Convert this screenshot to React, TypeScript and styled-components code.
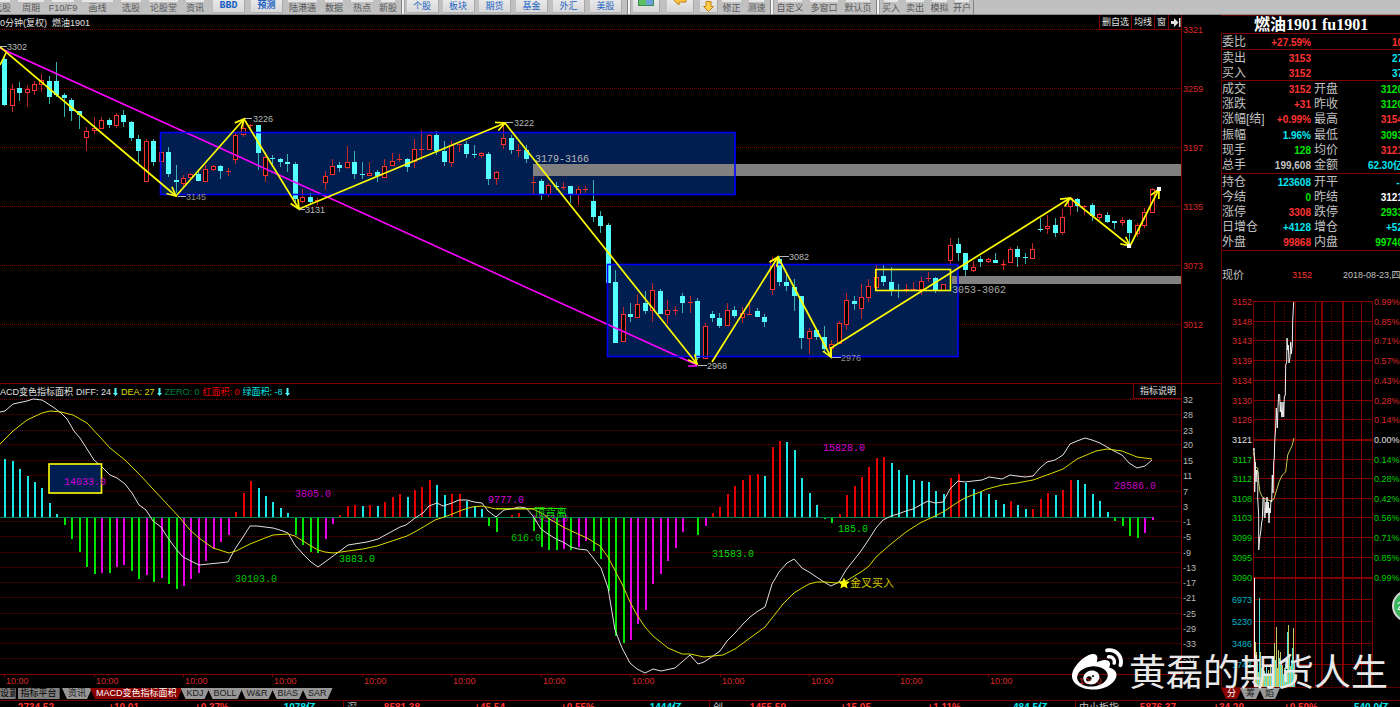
import React from 'react';
import styled, { createGlobalStyle } from 'styled-components';
import { FaWeibo } from 'react-icons/fa';

const SANS = '"Liberation Sans", "Noto Sans CJK SC", sans-serif';
const MONO = '"Liberation Mono", "Noto Sans CJK SC", monospace';
const SERIF = '"Liberation Serif", "Noto Sans CJK SC", serif';

const C = {
  red: '#ff3232',
  axis: '#dc2828',
  line: '#800000',
  dim: '#5c0000',
  dots: '#680000',
  cyan: '#54ffff',
  aqua: '#00e6f0',
  green: '#00e600',
  yellow: '#ffff00',
  grey: '#c0c0c0',
  navy: '#001f50',
  blue: '#0000ff',
};

const GlobalStyle = createGlobalStyle`
  * { box-sizing: border-box; }
  body { margin: 0; background: #000; font-family: ${SANS}; overflow: hidden; }
  button { font-family: inherit; padding: 0; margin: 0; border: 0; background: none; cursor: pointer; white-space: nowrap; }
  svg { display: block; }
`;

const Page = styled.div`
  position: relative;
  display: flex;
  flex-direction: column;
  height: 100vh;
  overflow: hidden;
  color: ${C.grey};
`;

/* ---------- top toolbar ---------- */
const Toolbar = styled.header`
  flex: none;
  display: flex;
  height: 15px;
  overflow: hidden;
  background: #c0c0c0;
  border-bottom: 1px solid #8c8c8c;
`;
const ToolGroup = styled.div`
  display: flex;
  flex: none;
  &:first-child { margin-left: -10px; }
`;
const ToolDivider = styled.span`
  flex: none;
  width: 6px;
  height: 14px;
  border-left: 2px solid #c0c0c0;
  background: linear-gradient(90deg, #808080 0 1px, #f4f4f4 1px 3px, #a0a0a0 3px);
`;
const ToolEnd = styled.span`
  width: 1px;
  background: #808080;
`;
const ToolButton = styled.button<{ $w: number }>`
  flex: none;
  width: ${(p) => p.$w}px;
  height: 14px;
  padding-top: 2px;
  font-size: 9px;
  line-height: 13px;
  color: #585858;
  background: linear-gradient(#e6e6e6, #e6e6e6) center top / calc(100% - 8px) 2px no-repeat;
`;
const BlueButton = styled.button<{ $w: number; $bold?: boolean }>`
  flex: none;
  display: flex;
  justify-content: center;
  width: ${(p) => p.$w}px;
  height: 14px;
  font-family: ${(p) => (p.$bold ? MONO : SANS)};
  font-weight: ${(p) => (p.$bold ? 700 : 400)};
  color: #1a62c4;
`;
const Face = styled.span<{ $w: number; $size?: number }>`
  display: flex;
  align-items: center;
  justify-content: center;
  width: ${(p) => p.$w}px;
  height: 13px;
  font-size: ${(p) => p.$size ?? 9}px;
  line-height: 12px;
  background: linear-gradient(#e8e8e8, #d8d8d8);
  border-right: 1px solid #a8a8a8;
  border-bottom: 1px solid #b0b0b0;
`;

/* ---------- main area ---------- */
const Main = styled.main`
  flex: none;
  display: flex;
`;
const Charts = styled.div`
  flex: 1;
  min-width: 0;
  padding-right: 1px;
`;
const Panel = styled.section<{ $lined?: boolean }>`
  position: relative;
  display: grid;
  grid-template-columns: 1fr 39px;
  ${(p) => p.$lined && `border-top: 1px solid ${C.line};`}
  margin-right: -1px;
  padding-right: 1px;
`;
const Plot = styled.svg<{ $h: number }>`
  width: 100%;
  height: ${(p) => p.$h}px;
  overflow: hidden;
`;
const PanelTitle = styled.div<{ $gap?: number }>`
  position: absolute;
  left: 0;
  top: 1px;
  display: flex;
  gap: ${(p) => p.$gap ?? 5}px;
  font-size: 9px;
  line-height: 14px;
  color: #e0e0e0;
  white-space: pre;
`;
const Legend = styled.span<{ $c: string }>`
  display: flex;
  align-items: center;
  gap: 2px;
  color: ${(p) => p.$c};
`;
const PanelButtons = styled.div`
  position: absolute;
  right: 39px;
  top: 0;
  display: flex;
`;
const PanelButton = styled.button<{ $w: number }>`
  width: ${(p) => p.$w}px;
  height: 15px;
  padding-top: 1px;
  font-size: 9px;
  line-height: 13px;
  color: #e0e0e0;
  border-left: 1px solid ${C.line};
  border-bottom: 1px solid ${C.line};
  svg { margin: 0 auto; }
`;
const TabBar = styled.nav`
  display: flex;
  height: 12px;
  padding-bottom: 1px;
`;
const SetButton = styled.button<{ $w: number }>`
  width: ${(p) => p.$w}px;
  height: 11px;
  margin-right: 2px;
  overflow: hidden;
  font-size: 9px;
  line-height: 11px;
  color: #000;
  background: #808080;
  border-right: 1px solid #555;
`;
const Tab = styled.button<{ $active?: boolean }>`
  height: 11px;
  padding: 0 6px;
  margin-right: -2px;
  font-size: 9px;
  line-height: 11px;
  color: ${(p) => (p.$active ? '#fff' : '#202020')};
  background: ${(p) => (p.$active ? '#8a0000' : '#989898')};
  clip-path: polygon(0 0, 100% 0, calc(100% - 5px) 100%, 5px 100%);
`;

/* ---------- quote sidebar ---------- */
const Sidebar = styled.aside`
  flex: none;
  width: 179px;
  overflow: hidden;
  border-top: 1px solid ${C.dim};
`;
const Title = styled.h1`
  margin: 0;
  padding-left: 33px;
  height: 17px;
  font: 700 16px/17px ${SERIF};
  color: #fff;
  white-space: nowrap;
`;
const SideBody = styled.div`
  border-left: 1px solid ${C.dim};
`;
const Quotes = styled.dl<{ $h: number }>`
  display: grid;
  grid-template-columns: 89px 89px;
  column-gap: 3px;
  grid-auto-rows: 1fr;
  height: ${(p) => p.$h}px;
  margin: 0;
  padding-top: 1px;
  border-top: 1px solid ${C.line};
`;
const Field = styled.div`
  display: flex;
  justify-content: space-between;
  align-items: center;
  line-height: 15px;
  white-space: nowrap;
  dt { font-size: 12px; }
  dd { margin: 0; font-size: 10px; font-weight: 700; }
`;
const NowRow = styled.div`
  display: grid;
  grid-template-columns: 70px 51px 80px;
  align-items: center;
  height: 49px;
  border-top: 1px solid ${C.line};
  font-size: 9px;
  line-height: 14px;
  white-space: nowrap;
  b { font-size: 11px; font-weight: 400; }
  span { color: ${C.red}; }
`;

/* ---------- index ticker ---------- */
const Ticker = styled.footer`
  flex: none;
  display: flex;
  height: 15px;
  margin-left: -23px;
  border-top: 1px solid ${C.line};
  font-size: 10px;
  font-weight: 700;
  line-height: 13px;
`;
const IndexCell = styled.div<{ $cols: string }>`
  flex: none;
  width: 366px;
  display: grid;
  grid-template-columns: ${(p) => p.$cols};
  border-left: 1px solid ${C.line};
  text-align: right;
  white-space: nowrap;
  color: ${C.red};
  b { font-weight: 400; text-align: left; padding-left: 3px; color: ${C.grey}; }
  em { font-style: normal; color: ${C.aqua}; }
`;

/* ---------- overlays ---------- */
const Watermark = styled.div`
  position: absolute;
  right: 12px;
  bottom: 10px;
  display: flex;
  align-items: center;
  gap: 6px;
  font: 400 37px/54px "Noto Sans CJK SC", sans-serif;
  color: #e8e8e8;
  white-space: nowrap;
  svg { color: #fff; }
`;
const Bubble = styled.button`
  position: absolute;
  right: -24px;
  top: 590px;
  width: 32px;
  height: 32px;
  padding-left: 3px;
  border: 2px solid #d8d8d8;
  border-radius: 50%;
  background: #3cb45a;
  color: #fff;
  font-size: 10px;
  text-align: left;
`;

/* ---------- data ---------- */
// bar index, colour, body top, body bottom, high, low
type Candle = [number, 'r' | 'c', number, number, number, number];
const candles: Candle[] = [
  [0, 'c', 59, 105, 55, 106], [1, 'r', 89, 105, 84, 112], [2, 'c', 88, 93, 82, 101], [3, 'r', 89, 92, 85, 107],
  [4, 'r', 84, 90, 81, 95], [5, 'r', 80, 84, 74, 92], [6, 'c', 81, 97, 76, 104], [7, 'c', 81, 95, 62, 97],
  [8, 'c', 95, 98, 93, 117], [9, 'c', 100, 111, 98, 121], [10, 'c', 111, 115, 111, 129], [11, 'r', 131, 137, 127, 151],
  [12, 'r', 128, 130, 117, 134], [13, 'r', 120, 128, 117, 129], [14, 'c', 120, 125, 118, 128], [15, 'r', 115, 125, 113, 128],
  [16, 'c', 115, 122, 110, 127], [17, 'c', 122, 138, 121, 141], [18, 'c', 139, 151, 135, 165], [19, 'r', 141, 181, 139, 182],
  [20, 'c', 141, 162, 139, 166], [21, 'r', 152, 161, 152, 161], [22, 'c', 152, 174, 147, 177], [23, 'c', 180, 182, 165, 193],
  [24, 'r', 178, 183, 175, 187], [25, 'r', 174, 177, 173, 180], [26, 'c', 174, 181, 171, 181], [27, 'r', 169, 181, 165, 182],
  [28, 'r', 166, 169, 165, 171], [29, 'c', 166, 171, 165, 179], [30, 'r', 171, 171, 168, 176], [31, 'r', 135, 159, 133, 164],
  [32, 'r', 128, 134, 122, 137], [33, 'r', 125, 126, 124, 130], [34, 'c', 125, 153, 125, 170], [35, 'r', 157, 175, 152, 182],
  [36, 'c', 158, 159, 155, 165], [37, 'c', 159, 162, 158, 167], [38, 'c', 162, 164, 154, 172], [39, 'c', 164, 199, 162, 205],
  [40, 'r', 197, 201, 189, 203], [41, 'c', 197, 202, 193, 204], [42, 'r', 200, 201, 198, 205], [43, 'r', 176, 182, 171, 190],
  [44, 'r', 166, 174, 159, 174], [45, 'c', 165, 168, 162, 172], [46, 'r', 162, 167, 146, 169], [47, 'c', 162, 174, 151, 179],
  [48, 'c', 174, 175, 162, 179], [49, 'r', 173, 175, 162, 176], [50, 'c', 172, 176, 170, 182], [51, 'r', 166, 177, 159, 177],
  [52, 'r', 161, 165, 153, 166], [53, 'r', 159, 160, 154, 162], [54, 'c', 159, 167, 158, 172], [55, 'r', 149, 161, 139, 168],
  [56, 'r', 149, 149, 130, 160], [57, 'r', 135, 149, 134, 150], [58, 'c', 135, 151, 131, 155], [59, 'c', 151, 162, 141, 166],
  [60, 'r', 145, 162, 141, 167], [61, 'r', 144, 144, 144, 152], [62, 'c', 144, 154, 141, 158], [63, 'c', 154, 155, 145, 158],
  [64, 'r', 153, 155, 152, 158], [65, 'c', 154, 179, 152, 185], [66, 'r', 172, 178, 171, 185], [67, 'r', 138, 144, 125, 149],
  [68, 'c', 138, 150, 135, 154], [69, 'r', 150, 150, 144, 157], [70, 'c', 150, 159, 145, 163], [71, 'r', 182, 182, 176, 195],
  [72, 'c', 181, 194, 179, 200], [73, 'r', 185, 194, 183, 197], [74, 'c', 186, 187, 182, 190], [75, 'r', 187, 187, 182, 190],
  [76, 'c', 186, 195, 186, 203], [77, 'r', 189, 194, 186, 205], [78, 'r', 189, 189, 186, 193], [79, 'c', 201, 217, 180, 222],
  [80, 'c', 216, 226, 211, 233], [81, 'c', 225, 283, 223, 283], [82, 'c', 282, 343, 270, 343], [83, 'r', 314, 341, 307, 341],
  [84, 'c', 314, 317, 303, 322], [85, 'r', 304, 317, 294, 317], [86, 'c', 303, 311, 291, 314], [87, 'r', 290, 310, 283, 322],
  [88, 'c', 291, 314, 289, 314], [89, 'r', 310, 314, 300, 324], [90, 'r', 310, 310, 306, 315], [91, 'c', 296, 303, 293, 313],
  [92, 'r', 302, 302, 296, 313], [93, 'c', 301, 358, 298, 360], [94, 'r', 326, 358, 323, 358], [95, 'c', 314, 318, 311, 322],
  [96, 'c', 318, 326, 313, 328], [97, 'r', 310, 325, 303, 325], [98, 'c', 310, 316, 306, 318], [99, 'r', 313, 317, 307, 323],
  [100, 'r', 314, 314, 300, 314], [101, 'c', 311, 317, 308, 317], [102, 'c', 317, 322, 314, 327], [103, 'r', 260, 289, 257, 295],
  [104, 'c', 259, 282, 256, 286], [105, 'c', 282, 286, 274, 291], [106, 'c', 287, 296, 279, 311], [107, 'c', 296, 338, 296, 349],
  [108, 'r', 331, 338, 328, 354], [109, 'c', 330, 337, 328, 340], [110, 'c', 337, 349, 326, 353], [111, 'r', 344, 348, 340, 352],
  [112, 'r', 323, 343, 321, 343], [113, 'r', 300, 324, 293, 330], [114, 'c', 301, 304, 296, 310], [115, 'r', 297, 308, 284, 319],
  [116, 'r', 286, 297, 279, 302], [117, 'r', 277, 287, 265, 290], [118, 'c', 276, 282, 265, 286], [119, 'c', 282, 291, 267, 296],
  [120, 'c', 290, 291, 284, 298], [121, 'r', 289, 289, 284, 293], [122, 'r', 289, 289, 282, 290], [123, 'r', 281, 289, 277, 295],
  [124, 'r', 278, 279, 272, 282], [125, 'c', 278, 290, 277, 293], [126, 'r', 284, 290, 284, 290], [127, 'r', 245, 260, 238, 266],
  [128, 'c', 244, 253, 238, 261], [129, 'c', 253, 270, 253, 276], [130, 'r', 267, 270, 261, 272], [131, 'c', 259, 262, 256, 267],
  [132, 'r', 259, 261, 258, 263], [133, 'c', 260, 263, 253, 263], [134, 'r', 264, 264, 260, 270], [135, 'r', 249, 262, 247, 263],
  [136, 'c', 249, 257, 246, 267], [137, 'c', 257, 258, 253, 264], [138, 'r', 249, 258, 243, 259], [139, 'c', 229, 229, 218, 232],
  [140, 'r', 226, 228, 215, 234], [141, 'c', 225, 233, 218, 237], [142, 'r', 217, 232, 209, 235], [143, 'r', 198, 206, 197, 215],
  [144, 'c', 199, 206, 198, 212], [145, 'r', 206, 206, 205, 215], [146, 'c', 205, 216, 203, 221], [147, 'r', 214, 217, 213, 220],
  [148, 'c', 215, 222, 212, 223], [149, 'c', 221, 223, 221, 229], [150, 'r', 220, 222, 217, 226], [151, 'c', 220, 233, 219, 246],
  [152, 'r', 225, 233, 223, 237], [153, 'r', 212, 225, 208, 228], [154, 'r', 189, 212, 188, 213],
];

// histogram: one "colour + end y" token per bar, "-" for an empty bar
const macdBars =
  'c459 c461 c469 c476 c482 c488 c503 c514 g525 g539 g552 g567 g574 m573 g573 m567 m565 g571 g579 m575 g582 m578 g584 g589 m586 m579 m573 m561 m549 m542 m535 r512 r493 r481 c488 c496 c502 c508 c513 g535 g545 g552 g553 m539 m524 r515 r506 r505 c506 r505 c506 r502 r497 r494 c497 r490 r487 r480 c485 c495 r494 r494 c501 c506 c509 g526 g532 - r515 r513 - g531 g547 g550 g550 m549 g550 m547 m541 g551 g559 g591 g636 g643 m640 m624 m610 m584 m574 m561 m548 m532 - g535 m526 r513 r507 r494 r486 r480 r475 r474 c476 r447 r441 c442 c450 c478 c493 c505 g519 g523 r514 r495 r486 r477 r467 r458 r457 c463 c470 c475 c480 c481 c482 c491 c494 r478 r474 c483 c489 c492 c494 c500 c504 r501 c505 c509 r509 r499 r493 c495 r490 r480 c480 c484 c494 c501 c512 g521 g526 g536 g538 m533 m520'.split(
    ' ',
  );
const barColor: Record<string, string> = { c: '#1ee6e6', r: '#e60000', g: '#00e600', m: '#e600e6' };

const diffLine =
  '0,412 5,411 13,404 27,401 33,399 42,400 53,407 61,413 67,419 74,431 80,438 87,449 94,460 102,467 110,475 117,478 125,484 132,493 139,505 146,510 153,521 161,527 168,538 176,549 183,557 199,565 228,562 235,549 243,537 250,526 257,526 273,528 280,530 288,533 295,545 303,554 311,562 318,567 325,562 340,551 348,545 367,542 378,539 400,527 406,525 415,518 423,513 429,506 437,503 443,506 452,503 459,500 467,500 474,502 482,503 488,511 496,517 504,510 511,509 519,507 526,508 533,516 541,529 548,534 556,539 563,542 571,547 578,549 587,550 601,568 608,588 615,630 622,648 630,663 637,669 645,673 653,669 661,671 675,668 690,655 698,664 704,662 713,656 720,651 727,641 735,633 743,624 750,617 758,611 765,607 772,584 779,572 787,563 794,559 802,568 809,572 815,576 824,582 831,586 839,582 846,570 861,551 869,539 876,528 883,520 891,516 898,514 906,511 913,509 922,504 928,501 935,503 943,502 950,489 958,481 965,482 973,481 982,480 989,477 1002,479 1010,475 1017,476 1025,477 1033,476 1040,468 1047,462 1055,460 1063,455 1070,444 1077,441 1085,438 1092,440 1100,443 1107,447 1114,451 1122,455 1129,463 1137,468 1145,466 1152,460';
const deaLine =
  '0,444 13,431 27,420 42,413 50,411 61,412 73,415 87,423 100,437 110,448 125,460 140,475 153,489 167,504 180,518 190,530 199,538 213,548 229,553 236,551 250,544 265,538 273,535 288,534 295,536 303,541 311,546 318,550 325,552 333,553 341,552 348,551 363,549 377,546 392,541 407,536 420,529 435,520 450,515 462,510 472,507 482,506 496,509 533,509 543,514 548,518 563,527 578,534 587,538 600,546 608,557 622,584 630,602 637,615 645,627 653,636 668,648 675,651 682,654 690,654 704,657 713,656 723,655 735,649 765,627 783,604 794,593 802,588 809,584 817,582 825,582 837,583 846,581 861,572 869,566 876,557 891,544 906,532 920,523 935,516 943,512 958,502 965,498 980,492 987,489 1002,485 1017,483 1033,480 1047,475 1063,469 1077,459 1096,451 1107,449 1122,451 1137,457 1152,459';

const priceGrid: [number, string][] = [
  [29, '3321'], [88, '3259'], [147, '3197'], [206, '3135'], [265, '3073'], [324, '3012'],
];
const macdGrid: [number, string][] = [
  [399, '32'], [414, '28'], [430, '23'], [444, '20'], [460, '15'], [475, '11'], [491, '7'], [506, '3'], [521, '-1'],
  [536, '-5'], [552, '-9'], [567, '-13'], [582, '-17'], [597, '-21'], [613, '-25'], [628, '-29'], [643, '-33'], [658, '-37'],
];
const timeTicks = [4, 94, 183, 272, 362, 451, 541, 630, 720, 809, 898, 988, 1077];

const trend: [number, number, number, number][] = [
  [0, 47, 176, 196], [176, 196, 244, 119], [244, 119, 299, 209], [299, 209, 505, 123], [505, 123, 697, 364],
  [712, 362, 778, 257], [778, 257, 831, 357], [831, 348, 1070, 198], [1070, 198, 1130, 246], [1130, 246, 1159, 189],
];

const barX = (i: number) => Math.round(4.2 + i * 7.45);

/* ---------- chart parts ---------- */
const Note = ({ x, y, c = '#b8b8b8', mono, size, children }: { x: number; y: number; c?: string; mono?: boolean; size?: number; children: string }) => (
  <text x={x} y={y + 3} fill={c} fontSize={size ?? (mono ? 10 : 9)} fontFamily={mono ? MONO : SANS}>
    {children}
  </text>
);

const Arrow = ({ seg: [x1, y1, x2, y2] }: { seg: [number, number, number, number] }) => {
  const a = Math.atan2(y2 - y1, x2 - x1);
  const barb = (d: number) => `${x2 - 10 * Math.cos(a + d)},${y2 - 10 * Math.sin(a + d)}`;
  return (
    <g stroke={C.yellow} strokeWidth="1.7" fill="none">
      <path d={`M${x1},${y1}L${x2},${y2}`} />
      <path d={`M${barb(0.45)}L${x2},${y2}L${barb(-0.45)}`} />
    </g>
  );
};

const DownArrow = () => (
  <svg width="5" height="8" viewBox="0 0 5 8" fill="#54ffff">
    <path d="M1.500 0h2v5H5L2.500 8 0 5h1.500z" />
  </svg>
);

const PricePlot = () => (
  <Plot $h={368}>
    <g transform="translate(0,-15)">
      {priceGrid.map(([y]) => (
        <line key={y} x1="0" x2="100%" y1={y + 0.5} y2={y + 0.5} stroke={C.line} strokeDasharray="1 1" />
      ))}
      <rect x="161" y="133" width="574" height="62" fill={C.navy} />
      <rect x="608" y="265" width="350" height="91" fill={C.navy} />
      <rect x="533" y="164" width="100%" height="12" fill="#808080" />
      <rect x="952" y="276" width="100%" height="8" fill="#808080" />
      <g shapeRendering="crispEdges">
        {candles.map(([i, k, t, b, h, l]) => {
          const x = barX(i);
          const col = k === 'r' ? C.red : C.cyan;
          return (
            <g key={i}>
              <rect x={x} y={h} width="1" height={Math.max(1, l - h)} fill={k === 'r' ? '#c02828' : '#38b0b0'} />
              {b - t < 2 ? (
                <rect x={x - 2} y={t} width="5" height="1" fill={col} />
              ) : k === 'c' ? (
                <rect x={x - 2} y={t} width="5" height={b - t} fill={col} />
              ) : (
                <rect x={x - 1.5} y={t + 0.5} width="4" height={b - t} fill="#000" stroke={col} />
              )}
            </g>
          );
        })}
      </g>
      <g fill="none" strokeWidth="1.6">
        <path d="M0,48L697,365M688,366H697" stroke="#ff00ff" />
        <rect x="160.5" y="132.5" width="574.5" height="62" stroke={C.blue} />
        <rect x="607.5" y="264.5" width="350.5" height="92" stroke={C.blue} />
        <rect x="875.8" y="269.5" width="74.7" height="21" stroke={C.yellow} />
        <path d="M0,65L6,53M831,348V357" stroke={C.yellow} />
      </g>
      {trend.map((s) => (
        <Arrow key={s.join()} seg={s} />
      ))}
      <rect x="1157" y="187" width="4" height="4" fill="#fff" />
      <rect x="1127" y="244" width="4" height="4" fill="#fff" />
      <path
        d="M0,46.5H7M245,118.5H252M178,196.5H186M299,209.5H305M506,122.5H513M780,256.5H789M698,365.5H707M832,357.5H841"
        stroke="#b8b8b8"
      />
      <Note x={7} y={47}>3302</Note>
      <Note x={253} y={119}>3226</Note>
      <Note x={186} y={197} c="#909090">3145</Note>
      <Note x={305} y={210}>3131</Note>
      <Note x={514} y={123}>3222</Note>
      <Note x={789} y={257}>3082</Note>
      <Note x={707} y={366}>2968</Note>
      <Note x={841} y={358} c="#909090">2976</Note>
      <Note x={535} y={159} mono>3179-3166</Note>
      <Note x={952} y={290} mono c="#a8a8a8">3053-3062</Note>
    </g>
  </Plot>
);

const Axis = ({ rows, top, h, end, c }: { rows: [number, string][]; top: number; h: number; end: number; c: string }) => (
  <Plot $h={h}>
    <g transform={`translate(0,${-top})`}>
      <line x1="0.5" x2="0.5" y1={top} y2={end} stroke={C.line} />
      {rows.map(([y, t]) => (
        <Note key={y} x={2} y={y + 1} c={c}>{t}</Note>
      ))}
    </g>
  </Plot>
);

const MacdPlot = () => (
  <Plot $h={304}>
    <g transform="translate(0,-384)">
      {macdGrid.map(([y]) => (
        <line key={y} x1="0" x2="100%" y1={y + 0.5} y2={y + 0.5} stroke={C.dots} strokeDasharray="1 1" />
      ))}
      <Note x={532} y={519} mono c="#c000c0">1953.0</Note>
      <g shapeRendering="crispEdges">
        {macdBars.map((t, i) => {
          if (t === '-') return null;
          const y = Number(t.slice(1));
          return (
            <rect key={i} x={barX(i)} y={Math.min(y, 517)} width="2" height={Math.abs(y - 517)} fill={barColor[t[0]]} />
          );
        })}
        <line x1="0" x2="1152" y1="517.5" y2="517.5" stroke="#008050" />
        <path d="M496,508.5H566" stroke="#60e000" />
      </g>
      <polyline points={diffLine} fill="none" stroke="#e0e0e0" />
      <polyline points={deaLine} fill="none" stroke="#dcdc00" />
      <rect x="49" y="464" width="52.5" height="29" fill={C.navy} stroke={C.yellow} strokeWidth="1.6" />
      <Note x={64} y={482} mono c="#d000d8">14033.0</Note>
      <Note x={295} y={494} mono c="#c000c0">3805.0</Note>
      <Note x={488} y={500} mono c="#d800d8">9777.0</Note>
      <Note x={823} y={448} mono c="#d800d8">15828.0</Note>
      <Note x={1114} y={486} mono c="#c000c0">28586.0</Note>
      <Note x={235} y={579} mono c="#00c000">30103.0</Note>
      <Note x={339} y={559} mono c="#00d800">3883.0</Note>
      <Note x={511} y={538} mono c="#00c000">616.0</Note>
      <Note x={712} y={554} mono c="#00d800">31583.0</Note>
      <Note x={838} y={529} mono c="#00d800">185.0</Note>
      <Note x={534} y={514} size={11} c="#00d800">顶背离</Note>
      <path d="M844 577.5l1.7 3.8 4.1.4-3.1 2.8.9 4.1-3.6-2.1-3.6 2.1.9-4.1-3.1-2.8 4.1-.4z" fill={C.yellow} />
      <Note x={850} y={584} size={11} c="#c8c800">金叉买入</Note>
      <line x1="0" x2="100%" y1="674.5" y2="674.5" stroke={C.line} />
      {timeTicks.map((x) => (
        <g key={x}>
          <rect x={x} y="675" width="1" height="2" fill={C.line} />
          <Note x={x + 2} y={681} c={C.axis}>10:00</Note>
        </g>
      ))}
    </g>
  </Plot>
);

/* ---------- intraday chart ---------- */
const pricePoints: [number, string, string][] = [
  [301, '3152', '0.99%'], [321, '3148', '0.85%'], [340, '3143', '0.71%'], [360, '3139', '0.57%'], [380, '3134', '0.43%'],
  [400, '3130', '0.28%'], [419, '3126', '0.14%'], [439, '3121', '0.00%'], [459, '3117', '0.14%'], [478, '3112', '0.28%'],
  [498, '3108', '0.42%'], [517, '3103', '0.56%'], [537, '3099', '0.71%'], [557, '3095', '0.85%'], [577, '3090', '0.99%'],
];
const volumeRows: [number, string][] = [[599, '6973'], [621, '5230'], [643, '3486'], [664, '1743']];
const intraday =
  '32.3,451 33,448 33.7,463 33.7,492 34.3,462 35,482 35.7,470 37,473 36.7,498 37.7,515 37.7,550 38.7,538 39.7,532 40.7,522 41.3,520 42,498 43,498 43.3,517 44,518 45,502 45.3,513 46,497 46.7,513 47.3,502 48,523 48.7,508 49.3,513 50,500 50.7,502 51.3,475 52,493 52.7,462 53.3,458 53.7,442 54.7,427 55.3,408 56.3,428 57,407 57.7,394 58.7,395 59.3,412 60,402 60.7,417 61.3,417 62,402 62.7,417 63.3,397 64.3,395 64.7,365 65.7,362 66,338 66.7,350 67.3,345 68,363 69,358 69.7,342 70.3,354 71.3,345 71.7,320 72.7,302';
const average =
  '32.3,452 33.7,458 34.3,467 36.7,468 37.7,482 39,492 41.3,497 44.7,499 49.7,501 53,499 54.7,493 58,482 61.3,475 64.7,472 66.7,455 71.3,445 73,438';
const volumes: [number, number, string][] = [
  [33, 642, 'y'], [34, 652, 'y'], [35, 662, 'c'], [36, 672, 'y'], [37, 598, 'c'], [38, 652, 'y'], [39, 668, 'c'], [40, 674, 'y'],
  [41, 665, 'y'], [42, 671, 'c'], [43, 676, 'y'], [44, 665, 'c'], [45, 674, 'y'], [46, 670, 'y'], [47, 676, 'c'], [48, 664, 'y'],
  [49, 675, 'c'], [50, 668, 'y'], [51, 660, 'c'], [52, 643, 'y'], [53, 660, 'c'], [54, 627, 'y'], [55, 668, 'y'], [56, 650, 'y'],
  [57, 658, 'c'], [58, 652, 'y'], [59, 662, 'c'], [60, 665, 'y'], [61, 674, 'c'], [62, 668, 'y'], [63, 664, 'c'], [64, 670, 'y'],
  [65, 632, 'c'], [66, 625, 'y'], [67, 655, 'c'], [68, 666, 'y'], [69, 660, 'c'], [70, 648, 'c'], [71, 628, 'y'], [72, 662, 'c'],
];

const Intraday = () => (
  <Plot $h={389}>
    <g transform="translate(-1,-299)">
      <g stroke={C.line} shapeRendering="crispEdges">
        {pricePoints.map(([y]) => (
          <line key={y} x1="32" x2="151" y1={y + 0.5} y2={y + 0.5} strokeWidth={y === 439 || y === 577 ? 2 : 1} />
        ))}
        {volumeRows.map(([y]) => (
          <line key={y} x1="32" x2="151" y1={y + 0.5} y2={y + 0.5} />
        ))}
        <line x1="0" x2="180" y1="687.5" y2="687.5" stroke={C.dim} />
        {[32, 53, 74, 94, 100, 121, 140, 151].map((x) => (
          <line key={x} x1={x + 0.5} x2={x + 0.5} y1="301" y2="687" strokeWidth={x === 100 || x === 121 ? 2 : 1} />
        ))}
        {[43, 63, 84, 110, 131].map((x) => (
          <line key={x} x1={x + 0.5} x2={x + 0.5} y1="301" y2="687" strokeDasharray="1 2" />
        ))}
      </g>
      <g shapeRendering="crispEdges">
        <rect x="33" y="578" width="1" height="109" fill="#fff" />
        {volumes.map(([x, y, c]) => (
          <rect key={x} x={x + 1} y={y} width="1" height={687 - y} fill={c === 'y' ? '#c8c860' : '#50e0e0'} />
        ))}
      </g>
      <polyline points={average} fill="none" stroke="#c8c850" />
      <polyline points={intraday} fill="none" stroke="#f0f0f0" />
      <g fontSize="9" fontFamily={SANS}>
        {pricePoints.map(([y, p, r], i) => {
          const c = i < 7 ? C.axis : i === 7 ? '#e0e0e0' : '#00d000';
          return (
            <g key={y} fill={c}>
              <text x="31" y={y + 4} textAnchor="end">{p}</text>
              <text x="153" y={y + 4}>{r}</text>
            </g>
          );
        })}
        {volumeRows.map(([y, v]) => (
          <text key={y} x="31" y={y + 4} textAnchor="end" fill="#00b4c8">{v}</text>
        ))}
      </g>
    </g>
  </Plot>
);

/* ---------- quote groups ---------- */
type Quote = [string, string, string];
const W = '#fff';
const groups: { h: number; rows: Quote[] }[] = [
  { h: 16, rows: [['委比', '+27.59%', C.red], ['', '10', C.red]] },
  { h: 31, rows: [['卖出', '3153', C.red], ['', '27', C.aqua], ['买入', '3152', C.red], ['', '37', C.aqua]] },
  {
    h: 93,
    rows: [
      ['成交', '3152', C.red], ['开盘', '3120', C.green], ['涨跌', '+31', C.red], ['昨收', '3120', C.green],
      ['涨幅[结]', '+0.99%', C.red], ['最高', '3154', C.red], ['振幅', '1.96%', C.aqua], ['最低', '3093', C.green],
      ['现手', '128', C.green], ['均价', '3121', C.red], ['总手', '199,608', C.grey], ['金额', '62.30亿', C.aqua],
    ],
  },
  {
    h: 77,
    rows: [
      ['持仓', '123608', C.aqua], ['开平', '--', C.aqua], ['今结', '0', C.green], ['昨结', '3121', W],
      ['涨停', '3308', C.red], ['跌停', '2933', C.green], ['日增仓', '+4128', C.aqua], ['增仓', '+52', C.aqua],
      ['外盘', '99868', C.red], ['内盘', '99740', C.green],
    ],
  },
];

const indices = [
  { name: '', v: ['2734.52', '+10.01', '+0.37%', '1078亿'], cols: '15px 61px 85px 90px 87px' },
  { name: '深', v: ['8581.38', '+45.54', '+0.55%', '1444亿'], cols: '15px 61px 85px 90px 87px' },
  { name: '创', v: ['1455.59', '+15.05', '+1.11%', '484.5亿'], cols: '15px 61px 85px 90px 87px' },
  { name: '中小板指', v: ['5876.37', '+34.20', '+0.59%', '540.0亿'], cols: '45px 55px 68px 74px 71px' },
];

const leftTools: [string, number][] = [['选股', 24], ['周期', 34], ['F10/F9', 30], ['画线', 39], ['选股', 28], ['论股堂', 37], ['资讯', 26]];
const midTools: [string, number][] = [['陆港通', 37], ['数据', 26], ['热点', 30], ['新股', 22]];
const markets: [string, number][] = [['个股', 35], ['板块', 37], ['期货', 36], ['基金', 38], ['外汇', 36], ['美股', 38]];
const viewTools: [string, number][] = [['自定义', 32], ['多窗口', 36], ['默认页', 32]];
const tradeTools: [string, number][] = [['买入', 22], ['卖出', 26], ['模拟', 23], ['开户', 22]];

const Tools = ({ items }: { items: [string, number][] }) => (
  <>
    {items.map(([t, w], i) => (
      <ToolButton key={t + i} $w={w}>{t}</ToolButton>
    ))}
  </>
);

export default function App() {
  return (
    <Page>
      <GlobalStyle />
      <Toolbar>
        <ToolGroup>
          <Tools items={leftTools} />
          <BlueButton $w={42} $bold><Face $w={32} $size={10}>BBD</Face></BlueButton>
          <BlueButton $w={34} $bold><Face $w={32}>预测</Face></BlueButton>
          <Tools items={midTools} />
        </ToolGroup>
        <ToolDivider />
        <ToolGroup>
          {markets.map(([t, w]) => (
            <BlueButton key={t} $w={w}><Face $w={32}>{t}</Face></BlueButton>
          ))}
        </ToolGroup>
        <ToolDivider />
        <ToolGroup>
          <BlueButton $w={30} aria-label="面板">
            <Face $w={27}>
              <svg width="16" height="13" viewBox="0 0 16 13">
                <rect width="16" height="6" fill="#3a8a50" />
                <rect x="1" width="7" height="5" fill="#5cc060" />
                <rect x="8" width="7" height="5" fill="#6aa0dc" />
              </svg>
            </Face>
          </BlueButton>
          <BlueButton $w={39} aria-label="后退">
            <Face $w={27}>
              <svg width="14" height="13" viewBox="0 0 14 13">
                <path d="M1 0.500L5-4v2h8v4H6v3z" fill="#ffc840" stroke="#c88010" />
              </svg>
            </Face>
          </BlueButton>
          <BlueButton $w={18} aria-label="下移">
            <Face $w={18}>
              <svg width="11" height="11" viewBox="0 0 11 11">
                <path d="M3 .5h5v5h2.500L5.500 10.500.5 5.500H3z" fill="#ffd050" stroke="#c88010" />
              </svg>
            </Face>
          </BlueButton>
          <Tools items={[['修正', 27], ['测速', 23]]} />
        </ToolGroup>
        <ToolDivider />
        <ToolGroup><Tools items={viewTools} /></ToolGroup>
        <ToolDivider />
        <ToolGroup><Tools items={tradeTools} /></ToolGroup>
        <ToolEnd />
      </Toolbar>

      <Main>
        <Charts>
          <Panel>
            <PricePlot />
            <Axis rows={priceGrid} top={15} h={368} end={383} c={C.axis} />
            <PanelTitle>
              <span>0分钟(复权)</span>
              <span>燃油1901</span>
            </PanelTitle>
            <PanelButtons>
              <PanelButton $w={32}>删自选</PanelButton>
              <PanelButton $w={23}>均线</PanelButton>
              <PanelButton $w={14}>窗</PanelButton>
              <PanelButton $w={14} aria-label="最新">
                <svg width="10" height="9" viewBox="0 0 10 9" fill="#e0e0e0">
                  <path d="M0 3h3V0l4.500 4.500L3 9V6H0zM8 0h1.500v9H8z" />
                </svg>
              </PanelButton>
            </PanelButtons>
          </Panel>
          <Panel $lined>
            <MacdPlot />
            <Axis rows={macdGrid} top={384} h={304} end={674} c="#b8b8b8" />
            <PanelTitle $gap={3}>
              <span>ACD变色指标面积</span>
              <Legend $c="#e0e0e0">DIFF: 24<DownArrow /></Legend>
              <Legend $c="#dcdc00">DEA: 27<DownArrow /></Legend>
              <Legend $c="#008040">ZERO: 0</Legend>
              <Legend $c="#f00000">红面积: 0</Legend>
              <Legend $c="#00e6e6">绿面积: -8<DownArrow /></Legend>
            </PanelTitle>
            <PanelButtons>
              <PanelButton $w={49}>指标说明</PanelButton>
            </PanelButtons>
          </Panel>
          <TabBar>
            <SetButton $w={16}>设置</SetButton>
            <SetButton $w={42}>指标平台</SetButton>
            <Tab>资讯</Tab>
            <Tab $active>MACD变色指标面积</Tab>
            <Tab>KDJ</Tab>
            <Tab>BOLL</Tab>
            <Tab>W&amp;R</Tab>
            <Tab>BIAS</Tab>
            <Tab>SAR</Tab>
          </TabBar>
        </Charts>

        <Sidebar>
          <Title>燃油1901 fu1901</Title>
          <SideBody>
            {groups.map((g) => (
              <Quotes key={g.h} $h={g.h}>
                {g.rows.map(([k, v, c], i) => (
                  <Field key={i} style={{ color: c }}>
                    <dt style={{ color: C.grey }}>{k}</dt>
                    <dd>{v}</dd>
                  </Field>
                ))}
              </Quotes>
            ))}
            <NowRow>
              <b>现价</b>
              <span>3152</span>
              <time>2018-08-23,四</time>
            </NowRow>
            <Intraday />
          </SideBody>
          <TabBar>
            <Tab $active>分</Tab>
            <Tab>筹</Tab>
            <Tab>焰</Tab>
          </TabBar>
        </Sidebar>
      </Main>

      <Ticker>
        {indices.map((x) => (
          <IndexCell key={x.name} $cols={x.cols}>
            <b>{x.name}</b>
            <span>{x.v[0]}</span>
            <span>{x.v[1]}</span>
            <span>{x.v[2]}</span>
            <em>{x.v[3]}</em>
          </IndexCell>
        ))}
      </Ticker>

      <Bubble>29</Bubble>
      <Watermark>
        <FaWeibo size={51} />
        黄磊的期货人生
      </Watermark>
    </Page>
  );
}
